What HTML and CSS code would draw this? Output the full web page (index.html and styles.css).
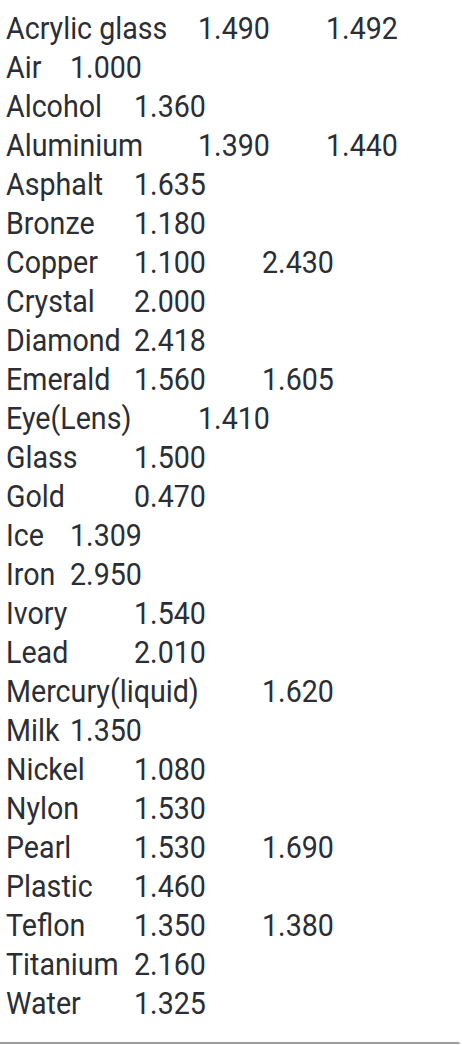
FILE: index.html
```html
<!DOCTYPE html>
<html>
<head>
<meta charset="utf-8">
<link rel="stylesheet" href="styles.css">
</head>
<body>
<div class="page">
  <div class="list">
    <div class="row">Acrylic glass	1.490	1.492</div>
    <div class="row">Air	1.000</div>
    <div class="row">Alcohol	1.360</div>
    <div class="row">Aluminium	1.390	1.440</div>
    <div class="row">Asphalt	1.635</div>
    <div class="row">Bronze	1.180</div>
    <div class="row">Copper	1.100	2.430</div>
    <div class="row">Crystal	2.000</div>
    <div class="row">Diamond	2.418</div>
    <div class="row">Emerald	1.560	1.605</div>
    <div class="row">Eye(Lens)	1.410</div>
    <div class="row">Glass	1.500</div>
    <div class="row">Gold		0.470</div>
    <div class="row">Ice	1.309</div>
    <div class="row">Iron	2.950</div>
    <div class="row">Ivory	1.540</div>
    <div class="row">Lead	2.010</div>
    <div class="row">Mercury(liquid)	1.620</div>
    <div class="row">Milk	1.350</div>
    <div class="row">Nickel	1.080</div>
    <div class="row">Nylon	1.530</div>
    <div class="row">Pearl	1.530	1.690</div>
    <div class="row">Plastic	1.460</div>
    <div class="row">Teflon	1.350	1.380</div>
    <div class="row">Titanium	2.160</div>
    <div class="row">Water	1.325</div>
  </div>
  <div class="rule"></div>
</div>
</body>
</html>
```
FILE: styles.css
```css
html, body {
  margin: 0;
  padding: 0;
  background: #ffffff;
}
.page {
  width: 462px;
  height: 1045px;
  overflow: hidden;
  position: relative;
}
.list {
  box-sizing: border-box;
  width: 516px;
  height: 1030px;
  padding: 9px 0 0 6.7px;
  transform: scaleX(0.895);
  transform-origin: 0 0;
  font-family: Roboto, "Noto Sans", sans-serif;
  font-size: 32px;
  line-height: 39px;
  color: #2b2e34;
}
.row {
  height: 39px;
  white-space: pre;
  tab-size: 71.508px;
  -moz-tab-size: 71.508px;
}
.rule {
  position: absolute;
  left: 0;
  top: 1042px;
  width: 460px;
  height: 2px;
  background: #9c9c9c;
  border-top-right-radius: 2px;
}
```
